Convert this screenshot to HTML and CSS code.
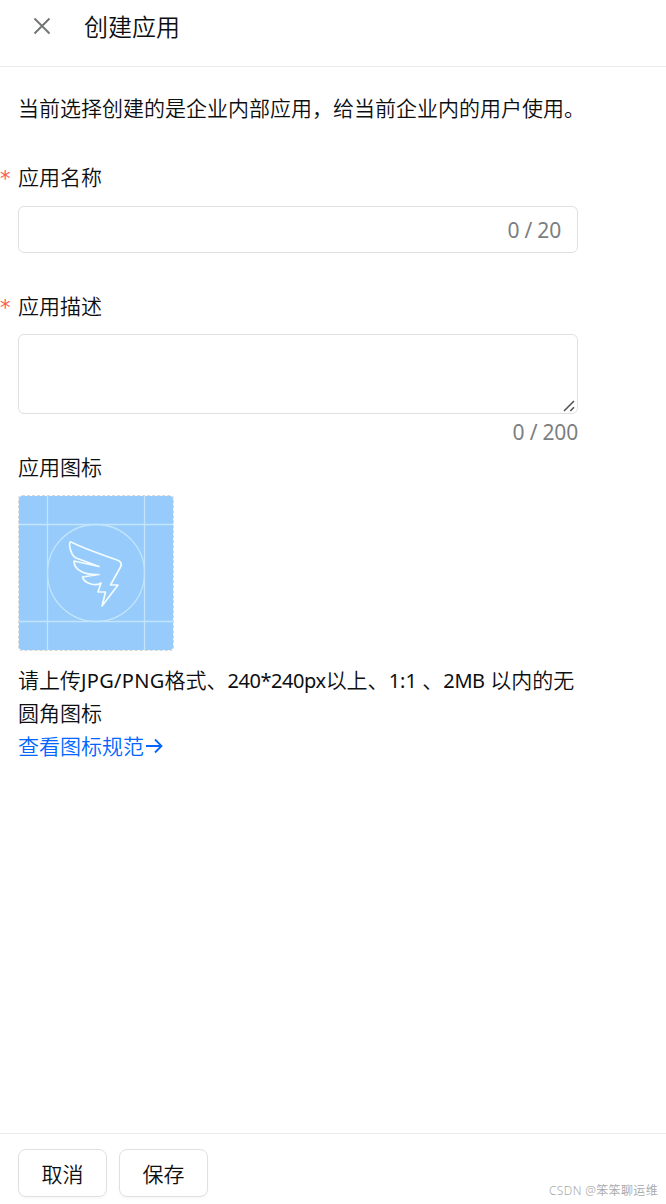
FILE: index.html
```html
<!DOCTYPE html>
<html lang="zh-CN">

<head>
    <meta charset="UTF-8">
    <meta name="viewport" content="width=device-width, initial-scale=1.0">
    <title>创建应用</title>
    <link rel="stylesheet" href="styles.css">
</head>

<body>
    <div class="drawer">
        <header class="header">
            <svg class="close" viewBox="0 0 18 18">
                <path d="M1.5 1.5L16.5 16.5M16.5 1.5L1.5 16.5" />
            </svg>
            <h1 class="title">创建应用</h1>
        </header>

        <main class="content">
            <p class="tip">当前选择创建的是企业内部应用，给当前企业内的用户使用。</p>

            <div class="label required">应用名称</div>
            <div class="input-box">
                <input class="input" type="text" maxlength="20">
                <span class="count">0 / 20</span>
            </div>

            <div class="label required label-desc">应用描述</div>
            <div class="textarea">
                <svg class="resize" viewBox="0 0 12 12">
                    <path d="M1 11L11 1M7.3 11L11 7.3" />
                </svg>
            </div>
            <div class="count count-desc">0 / 200</div>

            <div class="label label-icon">应用图标</div>
            <div class="upload">
                <svg class="logo" viewBox="0 0 154 154">
                    <path class="grid" d="M28.5 0V154M125.5 0V154M0 28.5H154M0 125.5H154" />
                    <circle class="grid" cx="77" cy="77" r="48.5" />
                    <path class="wing" d="M52 46C66 53 84 59 98 64Q104 66 101.500 71L91.500 89H99L83 110L86.500 96H79L82 87C76 91 65 87 63.500 81L80 78.500C67 79 55 75 55 65L80 70.500L57 62C51 59 49 45 52 46Z" />
                </svg>
            </div>

            <p class="hint">请上传<span class="format">JPG/PNG</span>格式、<span class="size">240*240px</span>以上、<span class="ratio">1:1</span> 、<span class="limit">2MB</span> 以内的无<br>圆角图标</p>
            <a class="link" href="#">查看图标规范<svg class="arrow" viewBox="0 0 18 18">
                    <path d="M1 9H16M10 2.500L16.500 9L10 15.500" />
                </svg></a>
        </main>

        <footer class="footer">
            <button class="btn">取消</button>
            <button class="btn">保存</button>
        </footer>
        <span class="watermark">CSDN @笨笨聊运维</span>
    </div>
</body>

</html>
```
FILE: styles.css
```css
* {
    box-sizing: border-box;
}

body {
    margin: 0;
    background-color: #fff;
    color: #0c0e10;
    font-family: "Noto Sans", "Noto Sans CJK SC", sans-serif;
    font-size: 21px;
    font-weight: 350;
}

.drawer {
    position: relative;
    display: flex;
    flex-direction: column;
    height: 1204px;
    overflow: hidden;
}

.header {
    display: flex;
    align-items: flex-start;
    height: 67px;
    padding: 9px 33px;
    border-bottom: 1px solid #ebebeb;
}

.close {
    width: 18px;
    height: 18px;
    margin: 8px 33px 0 0;
    fill: none;
    stroke: #747677;
    stroke-width: 2;
}

.title {
    margin: 0;
    font-size: 24px;
    font-weight: 350;
    line-height: 36px;
}

.content {
    flex: 1;
    width: 578px;
    padding: 25px 0 0 18px;
}

.tip {
    margin: 0 0 36px;
    line-height: 33px;
    white-space: nowrap;
}

.label {
    height: 33px;
    margin-bottom: 12px;
    line-height: 33px;
}

.required::before {
    content: "*";
    float: left;
    width: 18px;
    margin-left: -18px;
    color: #ff5b4c;
    font-family: "DejaVu Sans", sans-serif;
    font-weight: 400;
    line-height: 36px;
}

.input-box {
    display: flex;
    align-items: center;
    height: 47px;
    padding: 2px 16px 0 17px;
    border: 1px solid #e0e0e1;
    border-radius: 6px;
}

.input {
    flex: 1;
    min-width: 0;
    border: none;
    outline: none;
    background: none;
    font: inherit;
}

.count {
    color: #7c7e7f;
    font-weight: 400;
    line-height: 33px;
    letter-spacing: -0.2px;
}

.label-desc {
    margin-top: 37px;
    margin-bottom: 11px;
}

.label-icon {
    margin-bottom: 11px;
}

.textarea {
    display: flex;
    align-items: flex-end;
    justify-content: flex-end;
    height: 80px;
    padding: 1px 2px;
    border: 1px solid #e0e0e1;
    border-radius: 6px;
}

.resize {
    width: 12px;
    height: 12px;
    fill: none;
    stroke: #505050;
    stroke-width: 1.5;
}

.count-desc {
    height: 37px;
    text-align: right;
    line-height: 36px;
}

.upload {
    width: 156px;
    height: 156px;
    border: 1px dashed #d5d7d9;
    border-radius: 4px;
    background-color: #96cbfb;
    background-clip: padding-box;
}

.logo {
    display: block;
    width: 154px;
    height: 154px;
    fill: none;
}

.grid {
    stroke: #c3e5fc;
    stroke-width: 1.3;
}

.wing {
    stroke: #f2fcff;
    stroke-width: 1.7;
    stroke-linejoin: round;
}

.hint {
    width: 560px;
    margin: 13px 0 0;
    line-height: 33px;
    white-space: nowrap;
}

.format,
.size,
.ratio,
.limit {
    font-size: 20px;
    font-weight: 400;
}

.format {
    letter-spacing: 0.3px;
}

.size {
    letter-spacing: -0.45px;
}

.limit {
    letter-spacing: -0.4px;
}

.link {
    display: flex;
    align-items: center;
    height: 33px;
    margin-top: -2px;
    color: #0066ff;
    text-decoration: none;
}

.arrow {
    width: 18px;
    height: 18px;
    margin: 2px 0 0 1px;
    fill: none;
    stroke: #0066ff;
    stroke-width: 1.8;
}

.footer {
    display: flex;
    gap: 12px;
    height: 71px;
    padding: 15px 18px 0;
    border-top: 1px solid #ebebeb;
}

.btn {
    width: 89px;
    height: 48px;
    padding: 0;
    border: 1px solid #e0e0e1;
    border-radius: 8px;
    background-color: #fff;
    box-shadow: 0 2px 3px rgba(0, 0, 0, 0.03);
    color: #0c0e10;
    font: inherit;
}

.watermark {
    position: absolute;
    right: 8px;
    bottom: 4px;
    color: #a8a8a8;
    font-size: 12px;
    line-height: 18px;
    letter-spacing: 0.35px;
}
```
